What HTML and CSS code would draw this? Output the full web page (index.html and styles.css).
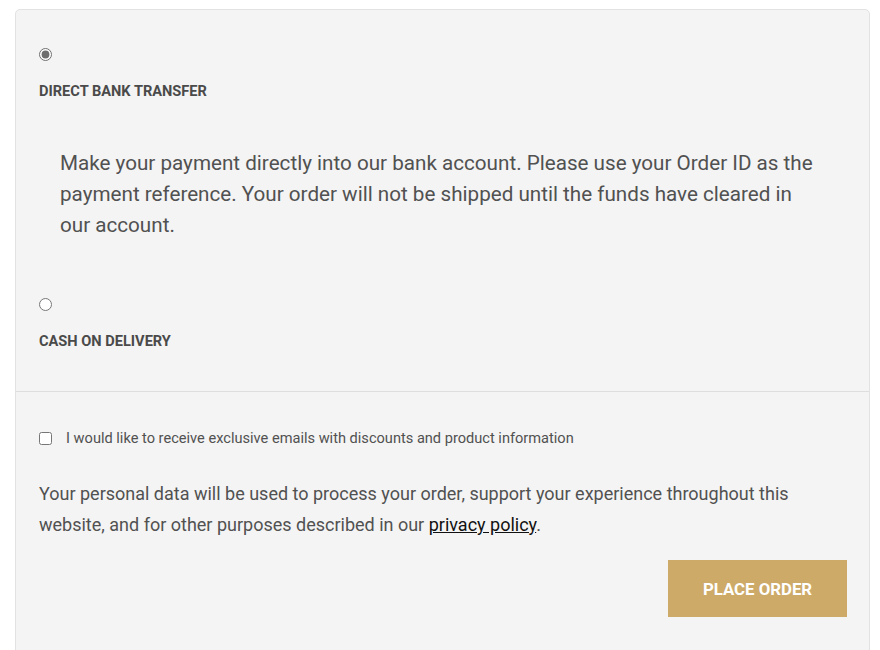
FILE: index.html
```html
<!DOCTYPE html>
<html>
<head>
<meta charset="utf-8">
<link rel="stylesheet" href="styles.css">
</head>
<body>
<div class="payment">
  <ul class="methods">
    <li class="method">
      <input type="radio" name="pm" class="radio" checked>
      <label class="method-label">DIRECT BANK TRANSFER</label>
      <div class="method-box">
        <p>Make your payment directly into our bank account. Please use your Order ID as the payment reference. Your order will not be shipped until the funds have cleared in our account.</p>
      </div>
    </li>
    <li class="method method-last">
      <input type="radio" name="pm" class="radio">
      <label class="method-label">CASH ON DELIVERY</label>
    </li>
  </ul>
  <div class="place-order">
    <label class="optin">
      <input type="checkbox" class="check">
      <span>I would like to receive exclusive emails with discounts and product information</span>
    </label>
    <p class="privacy">Your personal data will be used to process your order, support your experience throughout this website, and for other purposes described in our <a href="#" class="link">privacy policy</a>.</p>
    <div class="actions">
      <button class="btn">PLACE ORDER</button>
    </div>
  </div>
</div>
</body>
</html>
```
FILE: styles.css
```css
html, body {
  margin: 0;
  background: #ffffff;
}
body {
  padding: 9px 10px 0 15px;
  font-family: Roboto, "Liberation Sans", sans-serif;
  color: #515151;
}
.payment {
  background: #f4f4f4;
  border: 1px solid #e2e2e2;
  border-radius: 5px;
  min-height: 700px;
}
.methods {
  list-style: none;
  margin: 0;
  padding: 38px 23px 40px;
  border-bottom: 1px solid #dedede;
}
.method {
  margin: 0;
}
.method-last {
  margin-top: 36px;
}
.radio {
  display: block;
  margin: 0;
  width: 13px;
  height: 13px;
  accent-color: #6e6e6e;
}
.method-label {
  display: block;
  margin-top: 20px;
  font-size: 14.6px;
  line-height: 20px;
  font-weight: 700;
  color: #4a4a4a;
}
.method-box {
  margin-top: 26px;
  padding: 21px 21px;
}
.method-box p {
  margin: 0;
  font-size: 20.65px;
  line-height: 31px;
}
.place-order {
  padding: 36px 22px 40px 23px;
}
.optin {
  display: flex;
  align-items: center;
  font-size: 14.6px;
  line-height: 20px;
}
.check {
  margin: 0 14px 0 0;
  width: 13px;
  height: 13px;
}
.privacy {
  margin: 30px 0 0;
  font-size: 18px;
  line-height: 31px;
}
.link {
  color: #111111;
  text-decoration: underline;
}
.actions {
  display: flex;
  justify-content: flex-end;
  margin-top: 20px;
}
.btn {
  background: #cdaa68;
  color: #ffffff;
  border: none;
  font-family: Roboto, "Liberation Sans", sans-serif;
  font-weight: 700;
  font-size: 16.8px;
  width: 179px;
  height: 57px;
  padding: 0;
}
```
